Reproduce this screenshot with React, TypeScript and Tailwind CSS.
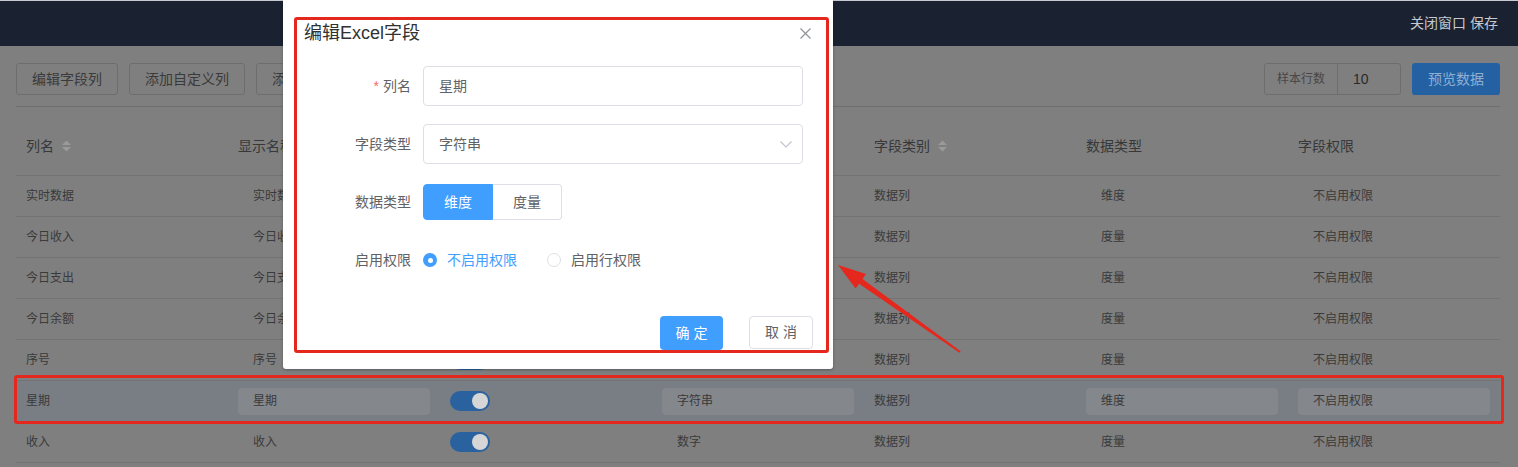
import React from "react";

type Row = {
  name: string;
  label: string;
  kind: string;
  category: string;
  dataType: string;
  perm: string;
  active?: boolean;
};

const rows: Row[] = [
  { name: "实时数据", label: "实时数据", kind: "字符串", category: "数据列", dataType: "维度", perm: "不启用权限" },
  { name: "今日收入", label: "今日收入", kind: "数字", category: "数据列", dataType: "度量", perm: "不启用权限" },
  { name: "今日支出", label: "今日支出", kind: "数字", category: "数据列", dataType: "度量", perm: "不启用权限" },
  { name: "今日余额", label: "今日余额", kind: "数字", category: "数据列", dataType: "度量", perm: "不启用权限" },
  { name: "序号", label: "序号", kind: "数字", category: "数据列", dataType: "度量", perm: "不启用权限" },
  { name: "星期", label: "星期", kind: "字符串", category: "数据列", dataType: "维度", perm: "不启用权限", active: true },
  { name: "收入", label: "收入", kind: "数字", category: "数据列", dataType: "度量", perm: "不启用权限" },
];

function SortIcon() {
  return (
    <svg width="9" height="12" viewBox="0 0 9 12" className="ml-[8px]">
      <polygon points="0,5 4.5,0.5 9,5" fill="#9a9a9a" />
      <polygon points="0,7 4.5,11.5 9,7" fill="#9a9a9a" />
    </svg>
  );
}

function Toggle() {
  return (
    <div className="w-[40px] h-[20px] rounded-full bg-[#2a62a0] flex items-center justify-end pr-[2px]">
      <div className="w-[16px] h-[16px] rounded-full bg-[#d6d6d6]" />
    </div>
  );
}

function CellBox({ text, active }: { text: string; active?: boolean }) {
  return (
    <div
      className={`h-[27px] w-full rounded-[4px] pl-[15px] flex items-center ${
        active ? "bg-[#84878c]" : ""
      }`}
    >
      {text}
    </div>
  );
}

function TableHead() {
  const heads: { t: string; sort?: boolean }[] = [
    { t: "列名", sort: true },
    { t: "显示名称", sort: true },
    { t: "" },
    { t: "字段类型" },
    { t: "字段类别", sort: true },
    { t: "数据类型" },
    { t: "字段权限" },
  ];
  return (
    <div className="grid grid-cols-7 h-[69px] pt-[10px] border-b border-[#737373] text-[14px] text-[#383838]">
      {heads.map((h, i) => (
        <div key={i} className="pl-[10px] flex items-center">
          <span className="leading-[20px]">{h.t}</span>
          {h.sort && <SortIcon />}
        </div>
      ))}
    </div>
  );
}

function TableRow({ r }: { r: Row }) {
  return (
    <div
      className={`grid grid-cols-7 h-[41px] border-b border-[#737373] text-[12px] text-[#3a3a3a] ${
        r.active ? "bg-[#797d84]" : ""
      }`}
    >
      <div className="pl-[10px] flex items-center">{r.name}</div>
      <div className="px-[10px] flex items-center">
        <CellBox text={r.label} active={r.active} />
      </div>
      <div className="pl-[10px] flex items-center">
        <Toggle />
      </div>
      <div className="px-[10px] flex items-center">
        <CellBox text={r.kind} active={r.active} />
      </div>
      <div className="pl-[10px] flex items-center">{r.category}</div>
      <div className="px-[10px] flex items-center">
        <CellBox text={r.dataType} active={r.active} />
      </div>
      <div className="px-[10px] flex items-center">
        <CellBox text={r.perm} active={r.active} />
      </div>
    </div>
  );
}

function FormLabel({ text, required }: { text: string; required?: boolean }) {
  return (
    <div className="w-[120px] pr-[12px] flex items-center justify-end text-[14px] text-[#606266]">
      {required && <span className="text-[#f56c6c] mr-[4px]">*</span>}
      {text}
    </div>
  );
}

function EditDialog() {
  return (
    <div className="absolute left-[283px] top-0 w-[550px] h-[369px] bg-white rounded-b-[3px] shadow-[0_1px_3px_rgba(0,0,0,0.3)]">
      <div className="flex items-center justify-between pl-[21px] pr-[22px] pt-[21px] h-[45px]">
        <span className="text-[18px] leading-[24px] text-[#303133]">编辑Excel字段</span>
        <svg width="11" height="11" viewBox="0 0 11 11">
          <path d="M0.5 0.5 L10.5 10.5 M10.5 0.5 L0.5 10.5" stroke="#909399" strokeWidth="1.2" />
        </svg>
      </div>

      <div className="pl-[20px] pr-[30px] pt-[21px]">
        <div className="flex h-[40px] mb-[18px]">
          <FormLabel text="列名" required />
          <div className="flex-1 h-[40px] border border-[#dcdfe6] rounded-[4px] pl-[15px] flex items-center text-[14px] text-[#606266]">
            星期
          </div>
        </div>

        <div className="flex h-[40px] mb-[18px]">
          <FormLabel text="字段类型" />
          <div className="flex-1 h-[40px] border border-[#dcdfe6] rounded-[4px] pl-[15px] pr-[10px] flex items-center justify-between text-[14px] text-[#606266]">
            <span>字符串</span>
            <svg width="12" height="7" viewBox="0 0 12 7">
              <path d="M0.5 0.5 L6 6 L11.5 0.5" fill="none" stroke="#c0c4cc" strokeWidth="1.2" />
            </svg>
          </div>
        </div>

        <div className="flex h-[40px] mb-[18px] items-center">
          <FormLabel text="数据类型" />
          <div className="flex h-[36px] text-[14px]">
            <div className="w-[70px] flex items-center justify-center bg-[#409eff] text-white rounded-l-[4px] border border-[#409eff]">
              维度
            </div>
            <div className="w-[69px] flex items-center justify-center text-[#606266] border border-l-0 border-[#dcdfe6] rounded-r-[4px]">
              度量
            </div>
          </div>
        </div>

        <div className="flex h-[40px] items-center">
          <FormLabel text="启用权限" />
          <div className="flex items-center text-[14px]">
            <div className="w-[14px] h-[14px] rounded-full bg-[#409eff] flex items-center justify-center">
              <div className="w-[5px] h-[5px] rounded-full bg-white" />
            </div>
            <span className="ml-[10px] text-[#409eff]">不启用权限</span>
            <div className="ml-[30px] w-[14px] h-[14px] rounded-full border border-[#dcdfe6] bg-white" />
            <span className="ml-[10px] text-[#606266]">启用行权限</span>
          </div>
        </div>
      </div>

      <div className="flex justify-end pr-[20px] pt-[36px]">
        <div className="w-[63px] h-[34px] rounded-[4px] bg-[#409eff] text-white text-[14px] flex items-center justify-center">
          确 定
        </div>
        <div className="ml-[26px] w-[64px] h-[33px] rounded-[4px] border border-[#dcdfe6] bg-white text-[#606266] text-[14px] flex items-center justify-center">
          取 消
        </div>
      </div>

      {/* callout frame around the form */}
      <div className="absolute left-[11px] top-[17px] right-[4px] bottom-[16px] border-[3px] border-[#e5281e] rounded-[3px] pointer-events-none" />
    </div>
  );
}

export default function App() {
  return (
    <div className="relative w-[1518px] h-[467px] overflow-hidden bg-[#7f7f7f] font-['Liberation_Sans','Noto_Sans_CJK_SC',sans-serif]">
      <header className="h-[46px] bg-[#1a2232] border-t border-[#c6c9ce] flex items-center justify-end pr-[20px]">
        <span className="text-[14px] text-[#c6c9cf]">关闭窗口 保存</span>
      </header>

      <div className="pl-[16px] pr-[18px]">
        <div className="flex justify-between pt-[17px] pb-[11px] border-b border-[#6f6f6f]">
          <div className="flex gap-[11px] text-[14px] text-[#3a3a3a]">
            <div className="h-[32px] px-[15px] border border-[#6d6d6d] rounded-[3px] flex items-center">编辑字段列</div>
            <div className="h-[32px] px-[15px] border border-[#6d6d6d] rounded-[3px] flex items-center">添加自定义列</div>
            <div className="h-[32px] px-[15px] border border-[#6d6d6d] rounded-[3px] flex items-center">添加计算列</div>
          </div>
          <div className="flex gap-[11px]">
            <div className="h-[32px] flex border border-[#6d6d6d] rounded-[3px]">
              <div className="w-[73px] flex items-center justify-center text-[12px] text-[#474747] border-r border-[#6d6d6d]">
                样本行数
              </div>
              <div className="w-[62px] pl-[15px] flex items-center text-[14px] text-[#2a2a2a]">10</div>
            </div>
            <div className="h-[32px] w-[88px] rounded-[3px] bg-[#2461a3] text-[#8fb0d3] text-[14px] flex items-center justify-center">
              预览数据
            </div>
          </div>
        </div>

        <TableHead />
        {rows.map((r) => (
          <TableRow key={r.name} r={r} />
        ))}
      </div>

      <EditDialog />

      {/* callout frame around the edited row */}
      <div className="absolute left-[14px] top-[375px] w-[1490px] h-[49px] border-[3px] border-[#e5281e] rounded-[3px] pointer-events-none" />

      {/* callout arrow */}
      <svg className="absolute left-0 top-0 pointer-events-none" width="1518" height="467">
        <polygon
          points="838,265 866,274 862.5,278.9 960.6,351.2 959.4,352.8 859.1,283.7 855.6,288.6"
          fill="#e5281e"
        />
      </svg>
    </div>
  );
}
